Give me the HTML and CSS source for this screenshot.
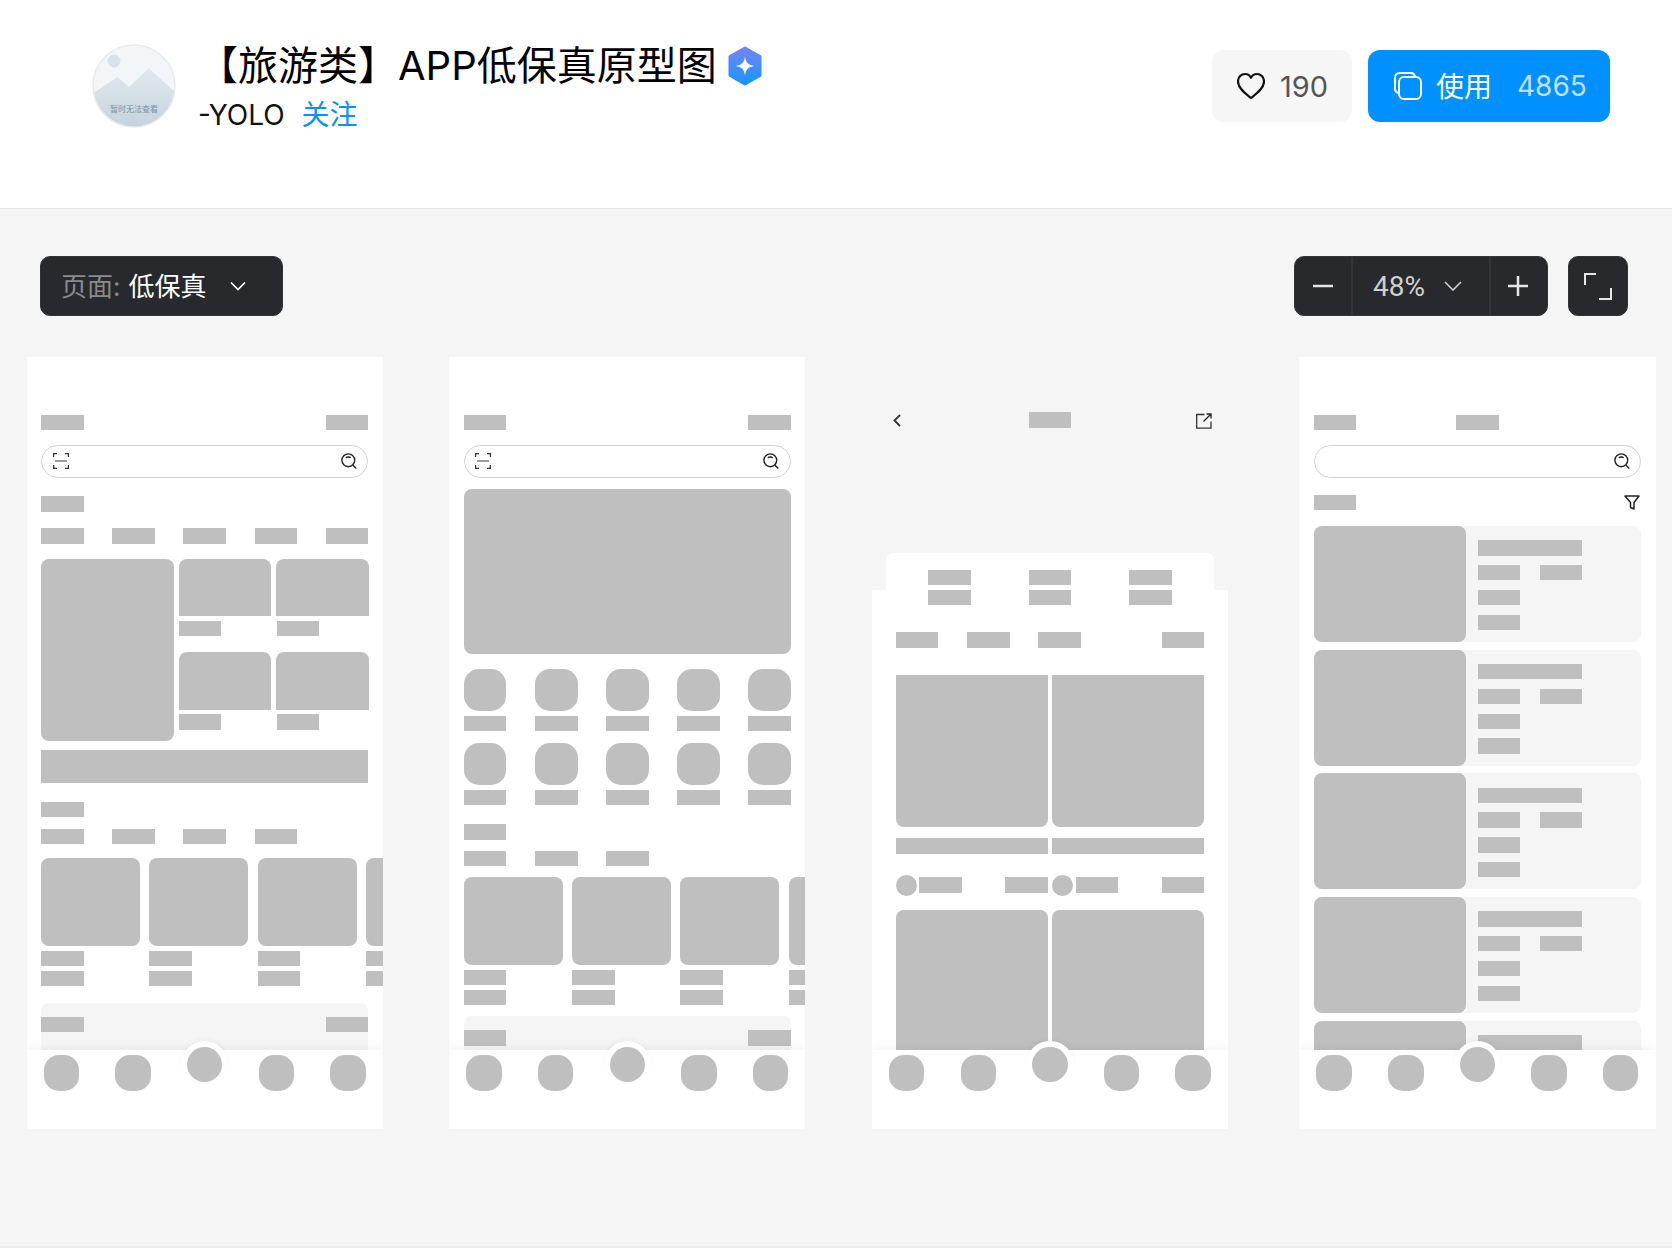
FILE: index.html
```html
<!DOCTYPE html>
<html lang="zh-CN">
<head>
    <meta charset="UTF-8">
    <title>【旅游类】APP低保真原型图</title>
    <link rel="stylesheet" href="styles.css">
</head>
<body>
    <header class="header">
        <svg class="avatar" viewBox="0 0 84 84">
            <defs>
                <linearGradient id="hill" x1="0" y1="0" x2="0" y2="1">
                    <stop offset="0" stop-color="#e2e9ee"/>
                    <stop offset="1" stop-color="#c3d3dd"/>
                </linearGradient>
                <clipPath id="round"><circle cx="42" cy="42" r="41"/></clipPath>
            </defs>
            <circle cx="42" cy="42" r="41" fill="#f3f6f8"/>
            <g clip-path="url(#round)">
                <ellipse cx="22" cy="17" rx="6.5" ry="6.5" fill="#d8e2e8"/>
                <path d="M0 50 L25.6 33 L37 43 L56.7 24 L84 49 V84 H0Z" fill="url(#hill)"/>
            </g>
            <circle cx="42" cy="42" r="41" fill="none" stroke="#e9eaeb" stroke-width="1.5"/>
            <text class="avatar-text" x="42" y="68" text-anchor="middle">暂时无法查看</text>
        </svg>
        <div class="info">
            <div class="title-line">
                <h1 class="title">【旅游类】APP低保真原型图</h1>
                <svg class="badge" viewBox="0 0 36 40">
                    <defs>
                        <linearGradient id="badgeFill" x1="0" y1="0" x2="0" y2="1">
                            <stop offset="0" stop-color="#7384f2"/>
                            <stop offset="1" stop-color="#1796ff"/>
                        </linearGradient>
                    </defs>
                    <path d="M18 2 L33 10.500 V29.500 L18 38 L3 29.500 V10.500Z" fill="url(#badgeFill)" stroke="url(#badgeFill)" stroke-width="3" stroke-linejoin="round"/>
                    <path d="M18 10.500 C19 17 21 19 27.500 20 C21 21 19 23 18 29.500 C17 23 15 21 8.500 20 C15 19 17 17 18 10.500Z" fill="#fff"/>
                </svg>
            </div>
            <div class="author">
                <span>-YOLO</span>
                <a class="follow">关注</a>
            </div>
        </div>
        <div class="actions">
            <div class="btn btn-like">
                <svg class="btn-icon" viewBox="0 0 28 28">
                    <path d="M14 26 C9 22 1 16.500 1 9.500 C1 5 4.300 2 8 2 C10.500 2 12.800 3.300 14 5.700 C15.200 3.300 17.500 2 20 2 C23.700 2 27 5 27 9.500 C27 16.500 19 22 14 26Z" fill="none" stroke="#111" stroke-width="2.200" stroke-linejoin="round"/>
                </svg>
                <span>190</span>
            </div>
            <div class="btn btn-use">
                <svg class="btn-icon" viewBox="0 0 28 28" fill="none" stroke="#fff" stroke-width="2">
                    <path d="M4.500 21 C2.500 20.500 1 19 1 17 V6 C1 3 3 1 6 1 H17 C19 1 20.500 2.500 21 4.500"/>
                    <rect x="5" y="5" width="22" height="22" rx="5"/>
                </svg>
                <span class="use-label">使用</span>
                <span class="use-count">4865</span>
            </div>
        </div>
    </header>

    <main class="stage">
        <div class="toolbar">
            <div class="dark-box page-select">
                <span class="page-key">页面:</span>
                <span class="page-value">低保真</span>
                <svg class="chevron" viewBox="0 0 16 10"><path d="M1 1.500 L8 8.500 L15 1.500" fill="none" stroke="#fff" stroke-width="1.600"/></svg>
            </div>
            <div class="tools">
                <div class="dark-box zoom">
                    <div class="zoom-btn zoom-minus">
                        <svg class="zoom-icon" viewBox="0 0 20 20"><path d="M0 10 H20" stroke="#e6e6e6" stroke-width="2.500"/></svg>
                    </div>
                    <div class="zoom-value">
                        <span>48%</span>
                        <svg class="chevron" viewBox="0 0 18 10"><path d="M1 1 L9 9 L17 1" fill="none" stroke="#cfcfcf" stroke-width="1.600"/></svg>
                    </div>
                    <div class="zoom-btn zoom-plus">
                        <svg class="zoom-icon" viewBox="0 0 20 20"><path d="M0 10 H20 M10 0 V20" stroke="#e6e6e6" stroke-width="2.500"/></svg>
                    </div>
                </div>
                <div class="dark-box fullscreen">
                    <svg class="full-icon" viewBox="0 0 28 27"><path d="M1 12 V1 H12 M27 15 V26 H15" fill="none" stroke="#e6e6e6" stroke-width="2"/></svg>
                </div>
            </div>
        </div>

        <div class="screens">
            <!-- 首页 -->
            <section class="screen">
                <div class="row top-row"><i class="bar"></i><i class="bar"></i></div>
                <div class="search">
                    <svg class="scan" viewBox="0 0 16 16"><path d="M.6 4 V.6 H4 M12 .6 H15.400 V4 M.6 12 V15.400 H4 M12 15.400 H15.400 V12" fill="none" stroke="#333" stroke-width="1.200"/><path d="M2 8 H14" stroke="#666" stroke-width="1.300"/></svg>
                    <svg class="lens" viewBox="0 0 16 16"><circle cx="7.300" cy="7.300" r="6.400" fill="none" stroke="#222" stroke-width="1.400"/><path d="M4.800 4.800 C6 3.700 8.500 3.700 9.700 4.800 M11.800 12 L15.300 15.500" fill="none" stroke="#222" stroke-width="1.400"/></svg>
                </div>
                <i class="bar sec-title"></i>
                <div class="row tabs"><i class="bar"></i><i class="bar"></i><i class="bar"></i><i class="bar"></i><i class="bar"></i></div>
                <div class="collage">
                    <div class="collage-main"></div>
                    <div class="collage-cell"><div class="collage-img"></div><i class="bar label"></i></div>
                    <div class="collage-cell"><div class="collage-img"></div><i class="bar label nudge"></i></div>
                    <div class="collage-cell"><div class="collage-img"></div><i class="bar label"></i></div>
                    <div class="collage-cell"><div class="collage-img"></div><i class="bar label nudge"></i></div>
                </div>
                <div class="banner"></div>
                <i class="bar list-title"></i>
                <div class="tabs-left"><i class="bar"></i><i class="bar"></i><i class="bar"></i><i class="bar"></i></div>
                <div class="cards">
                    <div class="card"><div class="card-img"></div><i class="bar label"></i><i class="bar label"></i></div>
                    <div class="card"><div class="card-img"></div><i class="bar label"></i><i class="bar label"></i></div>
                    <div class="card"><div class="card-img"></div><i class="bar label"></i><i class="bar label"></i></div>
                    <div class="card"><div class="card-img"></div><i class="bar label"></i><i class="bar label"></i></div>
                </div>
                <div class="row panel"><i class="bar"></i><i class="bar"></i></div>
                <div class="tabbar"><i class="tab"></i><i class="tab"></i><i class="tab tab-center"></i><i class="tab"></i><i class="tab"></i></div>
            </section>

            <!-- 分类页 -->
            <section class="screen">
                <div class="row top-row"><i class="bar"></i><i class="bar"></i></div>
                <div class="search">
                    <svg class="scan" viewBox="0 0 16 16"><path d="M.6 4 V.6 H4 M12 .6 H15.400 V4 M.6 12 V15.400 H4 M12 15.400 H15.400 V12" fill="none" stroke="#333" stroke-width="1.200"/><path d="M2 8 H14" stroke="#666" stroke-width="1.300"/></svg>
                    <svg class="lens" viewBox="0 0 16 16"><circle cx="7.300" cy="7.300" r="6.400" fill="none" stroke="#222" stroke-width="1.400"/><path d="M4.800 4.800 C6 3.700 8.500 3.700 9.700 4.800 M11.800 12 L15.300 15.500" fill="none" stroke="#222" stroke-width="1.400"/></svg>
                </div>
                <div class="hero"></div>
                <div class="icons">
                    <div class="icon-item"><i class="icon-box"></i><i class="bar label"></i></div>
                    <div class="icon-item"><i class="icon-box"></i><i class="bar label"></i></div>
                    <div class="icon-item"><i class="icon-box"></i><i class="bar label"></i></div>
                    <div class="icon-item"><i class="icon-box"></i><i class="bar label"></i></div>
                    <div class="icon-item"><i class="icon-box"></i><i class="bar label"></i></div>
                    <div class="icon-item"><i class="icon-box"></i><i class="bar label"></i></div>
                    <div class="icon-item"><i class="icon-box"></i><i class="bar label"></i></div>
                    <div class="icon-item"><i class="icon-box"></i><i class="bar label"></i></div>
                    <div class="icon-item"><i class="icon-box"></i><i class="bar label"></i></div>
                    <div class="icon-item"><i class="icon-box"></i><i class="bar label"></i></div>
                </div>
                <i class="bar list-title"></i>
                <div class="tabs-left tabs-tight"><i class="bar"></i><i class="bar"></i><i class="bar"></i></div>
                <div class="cards cards-tight">
                    <div class="card"><div class="card-img"></div><i class="bar label"></i><i class="bar label"></i></div>
                    <div class="card"><div class="card-img"></div><i class="bar label"></i><i class="bar label"></i></div>
                    <div class="card"><div class="card-img"></div><i class="bar label"></i><i class="bar label"></i></div>
                    <div class="card"><div class="card-img"></div><i class="bar label"></i><i class="bar label"></i></div>
                </div>
                <div class="row panel panel-tight"><i class="bar"></i><i class="bar"></i></div>
                <div class="tabbar"><i class="tab"></i><i class="tab"></i><i class="tab tab-center"></i><i class="tab"></i><i class="tab"></i></div>
            </section>

            <!-- 详情页 -->
            <section class="screen screen-detail">
                <div class="detail-nav">
                    <svg class="back" viewBox="0 0 8 13"><path d="M7 1 L1.500 6.500 L7 12" fill="none" stroke="#333" stroke-width="1.800"/></svg>
                    <i class="bar"></i>
                    <svg class="share" viewBox="0 0 16 16"><path d="M8.500 1.500 H.7 V15.200 H15 V8.500" fill="none" stroke="#333" stroke-width="1.300"/><path d="M7.500 8.500 L14.800 1.200 M10.500 1 H15 V5.500" fill="none" stroke="#222" stroke-width="1.300"/></svg>
                </div>
                <div class="detail-tab seg"><i class="bar"></i><i class="bar"></i><i class="bar"></i></div>
                <div class="detail-body">
                    <div class="seg"><i class="bar"></i><i class="bar"></i><i class="bar"></i></div>
                    <div class="detail-filter"><i class="bar"></i><i class="bar"></i><i class="bar"></i><i class="bar push"></i></div>
                    <div class="pair pair-first">
                        <div class="pair-col"><div class="pair-img"></div><i class="bar wide"></i><div class="meta"><i class="dot"></i><i class="bar"></i><i class="bar push"></i></div></div>
                        <div class="pair-col"><div class="pair-img"></div><i class="bar wide"></i><div class="meta"><i class="dot"></i><i class="bar"></i><i class="bar push"></i></div></div>
                    </div>
                    <div class="pair pair-next">
                        <div class="pair-img"></div>
                        <div class="pair-img"></div>
                    </div>
                </div>
                <div class="tabbar"><i class="tab"></i><i class="tab"></i><i class="tab tab-center"></i><i class="tab"></i><i class="tab"></i></div>
            </section>

            <!-- 列表页 -->
            <section class="screen screen-list">
                <div class="list-head"><i class="bar"></i><i class="bar"></i></div>
                <div class="search">
                    <span></span>
                    <svg class="lens" viewBox="0 0 16 16"><circle cx="7.300" cy="7.300" r="6.400" fill="none" stroke="#222" stroke-width="1.400"/><path d="M4.800 4.800 C6 3.700 8.500 3.700 9.700 4.800 M11.800 12 L15.300 15.500" fill="none" stroke="#222" stroke-width="1.400"/></svg>
                </div>
                <div class="row filter-row">
                    <i class="bar"></i>
                    <svg class="funnel" viewBox="0 0 16 15"><path d="M1 1 H15 L10 7.500 V14 L6.500 12.500 V7.500Z" fill="none" stroke="#222" stroke-width="1.500" stroke-linejoin="round"/></svg>
                </div>
                <div class="items">
                    <div class="item"><div class="item-img"></div><div class="item-text"><i class="bar bar-long"></i><div class="item-pair"><i class="bar"></i><i class="bar"></i></div><i class="bar"></i><i class="bar"></i></div></div>
                    <div class="item"><div class="item-img"></div><div class="item-text"><i class="bar bar-long"></i><div class="item-pair"><i class="bar"></i><i class="bar"></i></div><i class="bar"></i><i class="bar"></i></div></div>
                    <div class="item"><div class="item-img"></div><div class="item-text"><i class="bar bar-long"></i><div class="item-pair"><i class="bar"></i><i class="bar"></i></div><i class="bar"></i><i class="bar"></i></div></div>
                    <div class="item"><div class="item-img"></div><div class="item-text"><i class="bar bar-long"></i><div class="item-pair"><i class="bar"></i><i class="bar"></i></div><i class="bar"></i><i class="bar"></i></div></div>
                    <div class="item"><div class="item-img"></div><div class="item-text"><i class="bar bar-long"></i><div class="item-pair"><i class="bar"></i><i class="bar"></i></div><i class="bar"></i><i class="bar"></i></div></div>
                </div>
                <div class="tabbar"><i class="tab"></i><i class="tab"></i><i class="tab tab-center"></i><i class="tab"></i><i class="tab"></i></div>
            </section>
        </div>
    </main>
</body>
</html>
```

FILE: styles.css
```css
* { box-sizing: border-box; }
html, body { margin: 0; height: 100%; }
body {
    width: 1672px;
    height: 1248px;
    overflow: hidden;
    background: #f5f5f5;
    font-family: "Inter", "Noto Sans CJK SC", sans-serif;
    display: flex;
    flex-direction: column;
}

/* header */
.header {
    height: 209px;
    flex: none;
    background: #fff;
    border-bottom: 1px solid #e8e8e8;
    padding: 44px 62px 0 92px;
    display: flex;
    align-items: flex-start;
}
.avatar { width: 84px; height: 84px; flex: none; }
.avatar-text { font-size: 8px; fill: #7b92a3; font-family: "Noto Sans CJK SC", sans-serif; }
.info { margin-left: 22px; }
.title-line { display: flex; align-items: center; height: 44px; }
.title { margin: 0; font-size: 40px; font-weight: 400; line-height: 44px; color: #000; white-space: nowrap; }
.badge { width: 36px; height: 40px; margin-left: 10px; flex: none; }
.author { display: flex; gap: 17px; margin-top: 7px; font-size: 28px; line-height: 40px; color: #111; }
.follow { color: #0f8fff; }

.actions { margin-left: auto; margin-top: 6px; display: flex; gap: 16px; }
.btn { height: 72px; border-radius: 12px; display: flex; align-items: center; font-size: 29px; }
.btn-icon { width: 28px; height: 28px; flex: none; }
.btn-like { width: 140px; padding-left: 25px; background: #f6f6f6; color: #555; gap: 15px; }
.btn-use { width: 242px; padding-left: 26px; background: #0090ff; color: #fff; }
.use-label { margin-left: 14px; font-size: 28px; padding-bottom: 2px; }
.use-count { margin-left: 25px; font-size: 28px; color: #bfe1ff; }

/* canvas */
.stage { flex: 1; border-bottom: 2px solid #ebebeb; }
.toolbar { display: flex; justify-content: space-between; padding: 47px 44px 0 40px; }
.tools { display: flex; gap: 20px; }
.dark-box {
    height: 60px;
    background: #28292c;
    border: 1px solid #333437;
    border-radius: 10px;
    display: flex;
    align-items: center;
}
.page-select { width: 243px; padding: 0 0 3px 20px; font-size: 26px; }
.page-key { color: #8a8a8a; }
.page-value { color: #fff; margin-left: 8px; }
.page-select .chevron { width: 16px; height: 10px; margin: 3px 0 0 23px; }
.zoom { width: 254px; }
.zoom-btn { height: 100%; display: flex; align-items: center; justify-content: center; flex: none; }
.zoom-minus { width: 56px; }
.zoom-plus { width: 56px; padding-right: 2px; }
.zoom-icon { width: 20px; height: 20px; }
.zoom-value {
    flex: 1;
    height: 100%;
    border-left: 2px solid #333437;
    border-right: 2px solid #333437;
    display: flex;
    align-items: center;
    padding-left: 20px;
    font-family: "Roboto", sans-serif;
    font-size: 28px;
    color: #cfcfcf;
}
.zoom-value .chevron { width: 18px; height: 10px; margin-left: 19px; }
.fullscreen { width: 60px; justify-content: center; }
.full-icon { width: 28px; height: 27px; }

/* screens */
.screens { display: flex; gap: 66.3px; padding-left: 26.6px; margin-top: 41px; }
.screen {
    position: relative;
    width: 356.3px;
    height: 771.8px;
    flex: none;
    overflow: hidden;
    background: #fff;
    padding: 58px 14.5px 0;
}
.screen-list { margin-left: 4.9px; }
.bar { display: block; width: 42.7px; height: 15.3px; flex: none; background: #bfbfbf; }
.row { display: flex; justify-content: space-between; }

.search {
    height: 32.3px;
    margin-top: 15px;
    border: 1px solid #d2d2d2;
    border-radius: 17px;
    padding: 0 10.5px;
    display: flex;
    align-items: center;
    justify-content: space-between;
}
.scan, .lens { width: 16px; height: 16px; flex: none; }

.sec-title { margin-top: 18.7px; }
.tabs { margin-top: 16.7px; }
.collage {
    margin-top: 15.4px;
    display: grid;
    grid-template-columns: 133px 92.4px 93px;
    grid-template-rows: 93.3px 88.7px;
    column-gap: 4.6px;
}
.collage-main { grid-row: 1 / 3; grid-column: 1; background: #bfbfbf; border-radius: 8px; }
.collage-img { height: 57.5px; background: #bfbfbf; border-radius: 8px 8px 0 0; }
.label { margin-top: 4.7px; }
.nudge { margin-left: 1px; }
.banner { height: 32.7px; margin-top: 9px; background: #bfbfbf; }
.list-title { margin-top: 19px; }
.tabs-left { display: flex; gap: 28.5px; margin-top: 12px; }
.tabs-tight { margin-top: 11.4px; }
.cards { display: flex; gap: 9.3px; margin-top: 13.4px; }
.cards-tight { margin-top: 10.4px; }
.card { width: 99px; flex: none; }
.card-img { height: 88.3px; background: #bfbfbf; border-radius: 8px; margin-bottom: 5px; }
.panel {
    height: 70px;
    margin-top: 16.7px;
    padding-top: 14px;
    background: #f5f5f5;
    border-radius: 7px;
}
.panel-tight { margin-top: 11px; }

.hero { height: 165.3px; margin-top: 11.4px; background: #bfbfbf; border-radius: 8px; }
.icons {
    display: grid;
    grid-template-columns: repeat(5, 42.7px);
    justify-content: space-between;
    row-gap: 11.4px;
    margin-top: 14.4px;
}
.icon-box { display: block; height: 42.7px; background: #bfbfbf; border-radius: 15px; }

/* detail screen sits partly on the canvas */
.screen-detail {
    background: none;
    padding: 0;
    display: flex;
    flex-direction: column;
}
.detail-nav {
    display: grid;
    grid-template-columns: 1fr auto 1fr;
    align-items: center;
    height: 18px;
    margin-top: 54px;
    padding: 0 16px;
}
.back { width: 8px; height: 13px; margin-left: 5px; }
.share { width: 16px; height: 16px; justify-self: end; margin-top: 2px; }
.seg { display: flex; justify-content: center; gap: 57.9px; }
.detail-tab {
    height: 36.7px;
    flex: none;
    margin: 124.3px 14.4px 0;
    padding-top: 16.7px;
    background: #fff;
    border-radius: 7px 7px 0 0;
}
.detail-tab .bar { height: 15.3px; }
.detail-body { flex: 1; background: #fff; padding: 0 23.9px; }
.detail-filter { display: flex; gap: 28.5px; margin-top: 27px; }
.push { margin-left: auto; }
.pair { display: grid; grid-template-columns: 152px 152px; gap: 4.6px; }
.pair-first { margin-top: 27px; }
.pair-first .pair-img { height: 152px; border-radius: 0 0 8px 8px; }
.pair-next { margin-top: 14px; }
.pair-next .pair-img { height: 152px; border-radius: 8px 8px 0 0; }
.pair-img { background: #bfbfbf; }
.wide { width: 100%; margin-top: 11.7px; }
.meta { display: flex; align-items: center; height: 21px; margin-top: 21px; }
.dot { width: 21px; height: 21px; border-radius: 50%; background: #bfbfbf; margin-right: 2.3px; }

/* list screen */
.list-head { display: grid; grid-template-columns: 142.7px auto; }
.filter-row { margin-top: 17.4px; }
.funnel { width: 16px; height: 15px; margin-right: 1px; }
.items { display: flex; flex-direction: column; gap: 7.7px; margin-top: 15.7px; }
.item { height: 116px; flex: none; display: flex; background: #f5f5f5; border-radius: 8px; }
.item-img { width: 152px; flex: none; background: #bfbfbf; border-radius: 8px; }
.item-text { display: flex; flex-direction: column; gap: 9.5px; padding: 14.3px 0 0 12px; }
.bar-long { width: 104.7px; }
.item-pair { width: 104.7px; display: flex; justify-content: space-between; }

/* bottom tab bar, over the scrolled content */
.tabbar {
    position: absolute;
    left: 0;
    right: 0;
    bottom: 0;
    height: 78.8px;
    background: #fff;
    box-shadow: 0 -3px 8px rgba(0, 0, 0, 0.05);
    padding: 5px 17.2px 0;
    display: flex;
    justify-content: space-between;
    align-items: flex-start;
}
.tab { display: block; width: 35.5px; height: 35.5px; background: #bfbfbf; border-radius: 15px; }
.tab-center {
    border-radius: 50%;
    margin-top: -8.5px;
    box-shadow: 0 0 0 6px #fff, 0 -3px 6px 4px rgba(0, 0, 0, 0.05);
}
```
